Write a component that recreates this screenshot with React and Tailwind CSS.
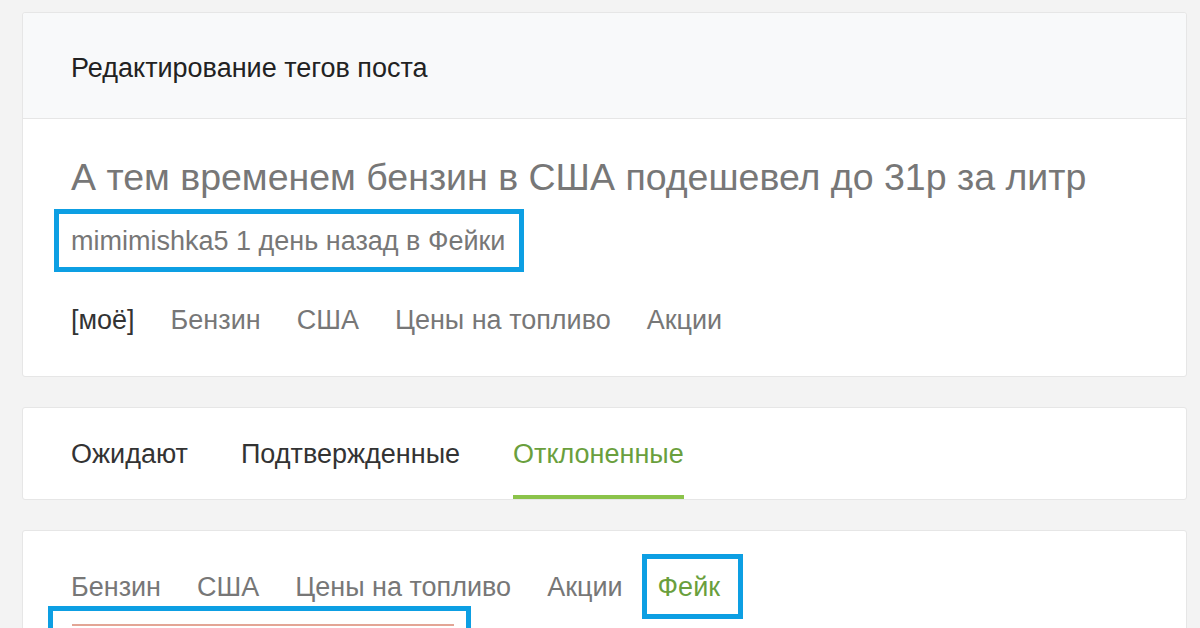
import React from 'react'

const font = { fontFamily: '"Liberation Sans", Arial, sans-serif' }

const postTags = ['Бензин', 'США', 'Цены на топливо', 'Акции']
const tabs = [
    { label: 'Ожидают', active: false },
    { label: 'Подтвержденные', active: false },
    { label: 'Отклоненные', active: true },
]

export default function App() {
    return (
        <div className="min-h-screen bg-[#f3f3f3] pt-[12px] pl-[22px] overflow-hidden" style={font}>
            {/* Post card */}
            <div className="w-[1165px] bg-white border border-[#e6e6e6] rounded-[3px]">
                <div className="h-[106px] flex items-center pt-[4px] px-12 bg-[#f8f9fa] border-b border-[#e6e6e6] rounded-t-[3px]">
                    <h1 className="text-[27px] leading-[32px] text-[#222]">Редактирование тегов поста</h1>
                </div>
                <div className="px-12 pt-[37px] pb-[40px]">
                    <h2 className="text-[37.5px] leading-[42px] text-[#777]">
                        А тем временем бензин в США подешевел до 31р за литр
                    </h2>
                    <div className="mt-[11px] -ml-[17px] inline-flex items-center h-[63px] pl-[12px] pr-[14px] border-[5px] border-[#0d9fe3]">
                        <span className="text-[27px] leading-[30px] text-[#777]">mimimishka5 1 день назад в Фейки</span>
                    </div>
                    <div className="mt-[32px] flex gap-[36px] text-[27px] leading-[32px]">
                        <span className="text-[#333]">[моё]</span>
                        {postTags.map(t => (
                            <span key={t} className="text-[#777]">{t}</span>
                        ))}
                    </div>
                </div>
            </div>

            {/* Tabs */}
            <div className="mt-[30px] w-[1165px] bg-white border border-[#e6e6e6] rounded-[3px]">
                <div className="flex gap-[53px] px-12">
                    {tabs.map(t => (
                        <div
                            key={t.label}
                            className={`pt-[31px] pb-[26px] border-b-4 text-[27px] leading-[30px] ${t.active
                                ? 'border-[#8bc34a] text-[#6a9f3d]'
                                : 'border-transparent text-[#333]'
                                }`}
                        >
                            {t.label}
                        </div>
                    ))}
                </div>
            </div>

            {/* Tag list */}
            <div className="mt-[30px] w-[1165px] h-[200px] bg-white border border-[#e6e6e6] rounded-t-[3px]">
                <div className="px-12 pt-[23px]">
                    <div className="flex items-center gap-[36px] text-[27px] leading-[32px]">
                        {postTags.map(t => (
                            <span key={t} className="text-[#777]">{t}</span>
                        ))}
                        <span className="-ml-[17px] h-[65px] flex items-center pl-[11px] pr-[18px] border-[5px] border-[#0d9fe3] text-[#6a9f3d]">
                            Фейк
                        </span>
                    </div>
                    <div className="-mt-[13px] -ml-[23px] w-[423px] h-[60px] pl-[19px] pt-[13px] border-[5px] border-[#0d9fe3]">
                        <div className="w-[382px] h-[30px] border-t-2 border-[#e3a595]" />
                    </div>
                </div>
            </div>
        </div>
    )
}
